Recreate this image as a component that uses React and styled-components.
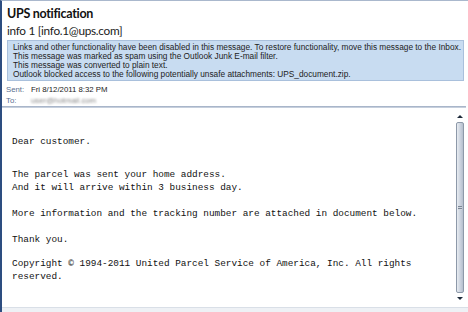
import React from 'react'
import styled, { createGlobalStyle } from 'styled-components'

const Global = createGlobalStyle`
  html, body { margin: 0; padding: 0; background: #fff; }
  body { width: 468px; height: 312px; overflow: hidden; }
`

const Window = styled.div`
  width: 468px;
  height: 312px;
  box-sizing: border-box;
  display: flex;
  flex-direction: column;
  border-left: 2px solid #2d4d80;
  border-top: 1px solid #aab8cd;
  background: #fff;
  font-family: "Lato", "Liberation Sans", sans-serif;
`

const Header = styled.div`
  padding: 4px 5px 0 5px;
  display: flex;
  flex-direction: column;
`

const Title = styled.div`
  font-size: 12.5px;
  font-weight: 700;
  letter-spacing: -0.3px;
  color: #111;
  line-height: 17px;
`

const From = styled.div`
  font-size: 11.8px;
  letter-spacing: -0.3px;
  color: #222;
  line-height: 17px;
`

const InfoBar = styled.div`
  margin-top: 1px;
  width: 457px;
  box-sizing: border-box;
  background: #c8dcf1;
  border: 1px solid #a9c0dc;
  padding: 2px 0 1px 5px;
  font-family: "Liberation Sans", sans-serif;
  font-size: 8.3px;
  line-height: 9px;
  color: #222;
  white-space: nowrap;
  overflow: hidden;
`

const Meta = styled.div`
  padding: 3px 0 0 4px;
  display: grid;
  grid-template-columns: 25px auto;
  font-family: "Liberation Sans", sans-serif;
  font-size: 7.8px;
  line-height: 11px;
`

const Label = styled.span`
  color: #5a6f90;
`

const Value = styled.span`
  color: #222;
  ${p => p.$blur && 'filter: blur(1.3px); color: #888;'}
`

const Separator = styled.div`
  height: 2px;
  background: linear-gradient(#9aa9c0, #d5dce6);
  margin-right: 2px;
`

const Body = styled.div`
  flex: 1;
  display: flex;
  min-height: 0;
`

const Text = styled.div`
  flex: 1;
  padding: 27px 0 0 10px;
  display: flex;
  flex-direction: column;
`

const Para = styled.pre`
  margin: ${p => p.$gap ?? 13}px 0 0;
  font-family: "Liberation Mono", monospace;
  font-size: 9.4px;
  line-height: 13px;
  color: #111;
  &:first-child { margin-top: 0; }
`

const Scroll = styled.div`
  width: 11px;
  margin: 3px 3px 3px 0;
  display: flex;
  flex-direction: column;
  align-items: center;
`

const Arrow = styled.div`
  width: 0;
  height: 0;
  margin: 4px 0;
  border-left: 3px solid transparent;
  border-right: 3px solid transparent;
  ${p => p.$up
    ? 'border-bottom: 3px solid #1d2a3a;'
    : 'border-top: 3px solid #1d2a3a;'}
`

const Thumb = styled.div`
  flex: 1;
  width: 8px;
  box-sizing: border-box;
  border: 1px solid #8d99a9;
  border-radius: 2px;
  background: linear-gradient(90deg, #e9edf2, #c8d0dc 60%, #b5bfcd);
  display: flex;
  align-items: center;
  justify-content: center;
`

const Grip = styled.div`
  width: 4px;
  height: 4px;
  background: repeating-linear-gradient(#7c8796 0 1px, #d0d6de 1px 2px);
`

const Footer = styled.div`
  height: 4px;
  border-top: 1px solid #d9dfe7;
  background: #eef1f5;
`

const paragraphs = [
  { text: 'Dear customer.' },
  { text: 'The parcel was sent your home address.\nAnd it will arrive within 3 business day.', gap: 20 },
  { text: 'More information and the tracking number are attached in document below.' },
  { text: 'Thank you.' },
  { text: 'Copyright \u00a9 1994-2011 United Parcel Service of America, Inc. All rights\nreserved.', gap: 11 },
]

export default function App() {
  return (
    <>
      <Global />
      <Window>
        <Header>
          <Title>UPS notification</Title>
          <From>info 1 [info.1@ups.com]</From>
          <InfoBar>
            <div>Links and other functionality have been disabled in this message. To restore functionality, move this message to the Inbox.</div>
            <div>This message was marked as spam using the Outlook Junk E-mail filter.</div>
            <div>This message was converted to plain text.</div>
            <div>Outlook blocked access to the following potentially unsafe attachments: UPS_document.zip.</div>
          </InfoBar>
        </Header>
        <Meta>
          <Label>Sent:</Label>
          <Value>Fri 8/12/2011 8:32 PM</Value>
          <Label>To:</Label>
          <Value $blur>user@hotmail.com</Value>
        </Meta>
        <Separator />
        <Body>
          <Text>
            {paragraphs.map((p, i) => (
              <Para key={i} $gap={p.gap}>{p.text}</Para>
            ))}
          </Text>
          <Scroll>
            <Arrow $up />
            <Thumb><Grip /></Thumb>
            <Arrow />
          </Scroll>
        </Body>
        <Footer />
      </Window>
    </>
  )
}
